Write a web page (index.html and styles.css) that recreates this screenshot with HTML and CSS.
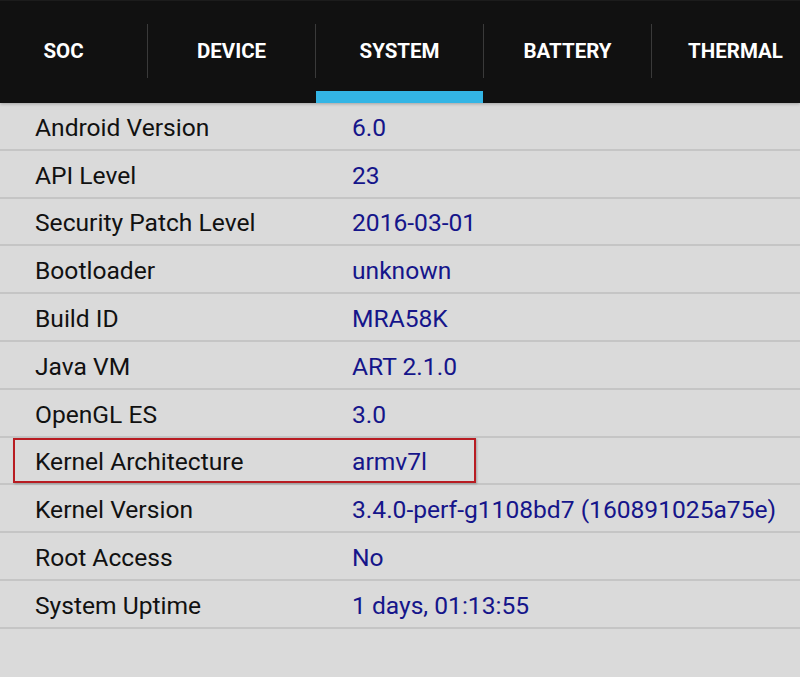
FILE: index.html
```html
<!DOCTYPE html>
<html lang="en">

<head>
	<meta charset="UTF-8">
	<meta name="viewport" content="width=device-width, initial-scale=1.0">
	<title>System</title>
	<link rel="stylesheet" href="styles.css">
</head>

<body>
	<div class="tabbar">
		<div class="tabs">
			<div class="tab">SOC</div>
			<div class="sep"></div>
			<div class="tab">DEVICE</div>
			<div class="sep"></div>
			<div class="tab active">SYSTEM</div>
			<div class="sep"></div>
			<div class="tab">BATTERY</div>
			<div class="sep"></div>
			<div class="tab">THERMAL</div>
		</div>
	</div>

	<ul class="info">
		<li><span class="key">Android Version</span><span class="val">6.0</span></li>
		<li><span class="key">API Level</span><span class="val">23</span></li>
		<li><span class="key">Security Patch Level</span><span class="val">2016-03-01</span></li>
		<li><span class="key">Bootloader</span><span class="val">unknown</span></li>
		<li><span class="key">Build ID</span><span class="val">MRA58K</span></li>
		<li><span class="key">Java VM</span><span class="val">ART 2.1.0</span></li>
		<li><span class="key">OpenGL ES</span><span class="val">3.0</span></li>
		<li class="marked"><span class="key">Kernel Architecture</span><span class="val">armv7l</span><div class="mark"></div></li>
		<li><span class="key">Kernel Version</span><span class="val">3.4.0-perf-g1108bd7 (160891025a75e)</span></li>
		<li><span class="key">Root Access</span><span class="val">No</span></li>
		<li><span class="key">System Uptime</span><span class="val">1 days, 01:13:55</span></li>
	</ul>
</body>

</html>
```

FILE: styles.css
```css
* {
	margin: 0;
	padding: 0;
	list-style: none;
	box-sizing: border-box;
}

body {
	background: #dadada;
	font-family: Roboto, "Liberation Sans", sans-serif;
	overflow: hidden;
}

.tabbar {
	height: 103px;
	background: #111;
	border-top: 1px solid #1c1c1c;
	box-shadow: 0 1px 3px rgba(0, 0, 0, .25);
	overflow: hidden;
	position: relative;
}

.tabs {
	display: flex;
	height: 100%;
	margin-left: -20px;
}

.tab {
	flex: 0 0 167px;
	display: flex;
	align-items: center;
	justify-content: center;
	color: #fff;
	font-weight: bold;
	font-size: 20.5px;
	padding-bottom: 2px;
}

.tab.active {
	box-shadow: inset 0 -12px 0 #33b5e5;
}

.sep {
	flex: 0 0 1px;
	height: 54px;
	align-self: center;
	margin-bottom: 2px;
	background: #3a3a3a;
}

.info li {
	position: relative;
	display: flex;
	align-items: center;
	height: 47.8px;
	padding-left: 35px;
	padding-top: 3px;
	border-bottom: 2px solid #c5c5c5;
	font-size: 24.6px;
}

.key {
	width: 317px;
	color: #111;
}

.val {
	color: #15158a;
	white-space: nowrap;
}

.mark {
	position: absolute;
	left: 13px;
	top: 0;
	width: 463px;
	height: 45px;
	border: 2px solid #b81c22;
	box-shadow: 1px 1px 2px rgba(0, 0, 0, .25);
}
```
